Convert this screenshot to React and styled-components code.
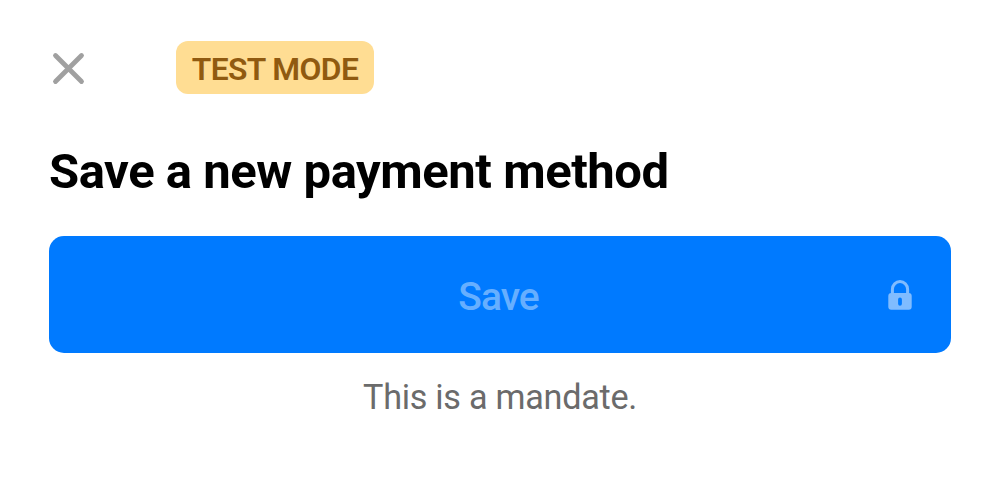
import React from 'react';
import styled, { createGlobalStyle } from 'styled-components';

const GlobalStyle = createGlobalStyle`
  * { box-sizing: border-box; }
  body { margin: 0; background: #fff; font-family: Roboto, sans-serif; }
`;

const Sheet = styled.main`
  width: 1000px;
  height: 500px;
  padding: 41px 49px 0;
  overflow: hidden;
  background: #fff;
`;

const TopBar = styled.header`
  display: flex;
  align-items: center;
  height: 54px;
`;

const CloseButton = styled.button`
  display: flex;
  width: 38px;
  height: 38px;
  padding: 0;
  margin-right: 89px;
  border: 0;
  background: none;
`;

const TestBadge = styled.span`
  width: 198px;
  height: 53px;
  margin-bottom: 1px;
  border-radius: 12px;
  background: #ffdd93;
  color: #905a10;
  font-size: 31.8px;
  font-weight: 650;
  letter-spacing: -0.6px;
  line-height: 57px;
  text-align: center;
  white-space: nowrap;
`;

const Title = styled.h1`
  margin: 44px 0 0;
  height: 65px;
  font-size: 49px;
  font-weight: 680;
  letter-spacing: -0.46px;
  line-height: 66px;
  color: #000;
  white-space: nowrap;
`;

const SaveButton = styled.button`
  display: grid;
  grid-template-columns: 66px 1fr 66px;
  align-items: center;
  width: 902px;
  height: 117px;
  margin-top: 32px;
  padding: 0 18px;
  border: 0;
  border-radius: 15px;
  background: #007aff;
  color: #66afff;
  font-family: inherit;
`;

const Label = styled.span`
  grid-column: 2;
  padding-top: 4px;
  padding-right: 3px;
  font-size: 39px;
  font-weight: 500;
  letter-spacing: -1px;
  line-height: 50px;
  text-align: center;
`;

const Lock = styled.svg`
  justify-self: center;
`;

const Mandate = styled.p`
  margin: 19px 0 0;
  color: #6b6b6b;
  font-size: 34.2px;
  letter-spacing: -0.27px;
  line-height: 50px;
  text-align: center;
`;

export default function App() {
  return (
    <>
      <GlobalStyle />
      <Sheet>
        <TopBar>
          <CloseButton aria-label="Close">
            <svg width="38" height="38" viewBox="0 0 38 38" fill="none" stroke="#a0a0a0" strokeWidth="4.8">
              <path d="M6.5 6.5L32.5 32.5M32.5 6.5L6.5 32.5" strokeLinecap="round" />
            </svg>
          </CloseButton>
          <TestBadge>TEST MODE</TestBadge>
        </TopBar>
        <Title>Save a new payment method</Title>
        <SaveButton>
          <Label>Save</Label>
          <Lock width="26" height="32" viewBox="0 0 26 32">
            <path d="M5.4 15V10.2a7.6 7.6 0 0 1 15.2 0V15" fill="none" stroke="#80bcff" strokeWidth="3" />
            <path fillRule="evenodd" fill="#80bcff" d="M4.3 14h17.4a3 3 0 0 1 3 3v10.7a3 3 0 0 1-3 3H4.3a3 3 0 0 1-3-3V17a3 3 0 0 1 3-3zM13 18.6a1.9 1.9 0 0 0-1.9 1.9v4.3a1.9 1.9 0 0 0 3.8 0v-4.3a1.9 1.9 0 0 0-1.9-1.9z" />
          </Lock>
        </SaveButton>
        <Mandate>This is a mandate.</Mandate>
      </Sheet>
    </>
  );
}
